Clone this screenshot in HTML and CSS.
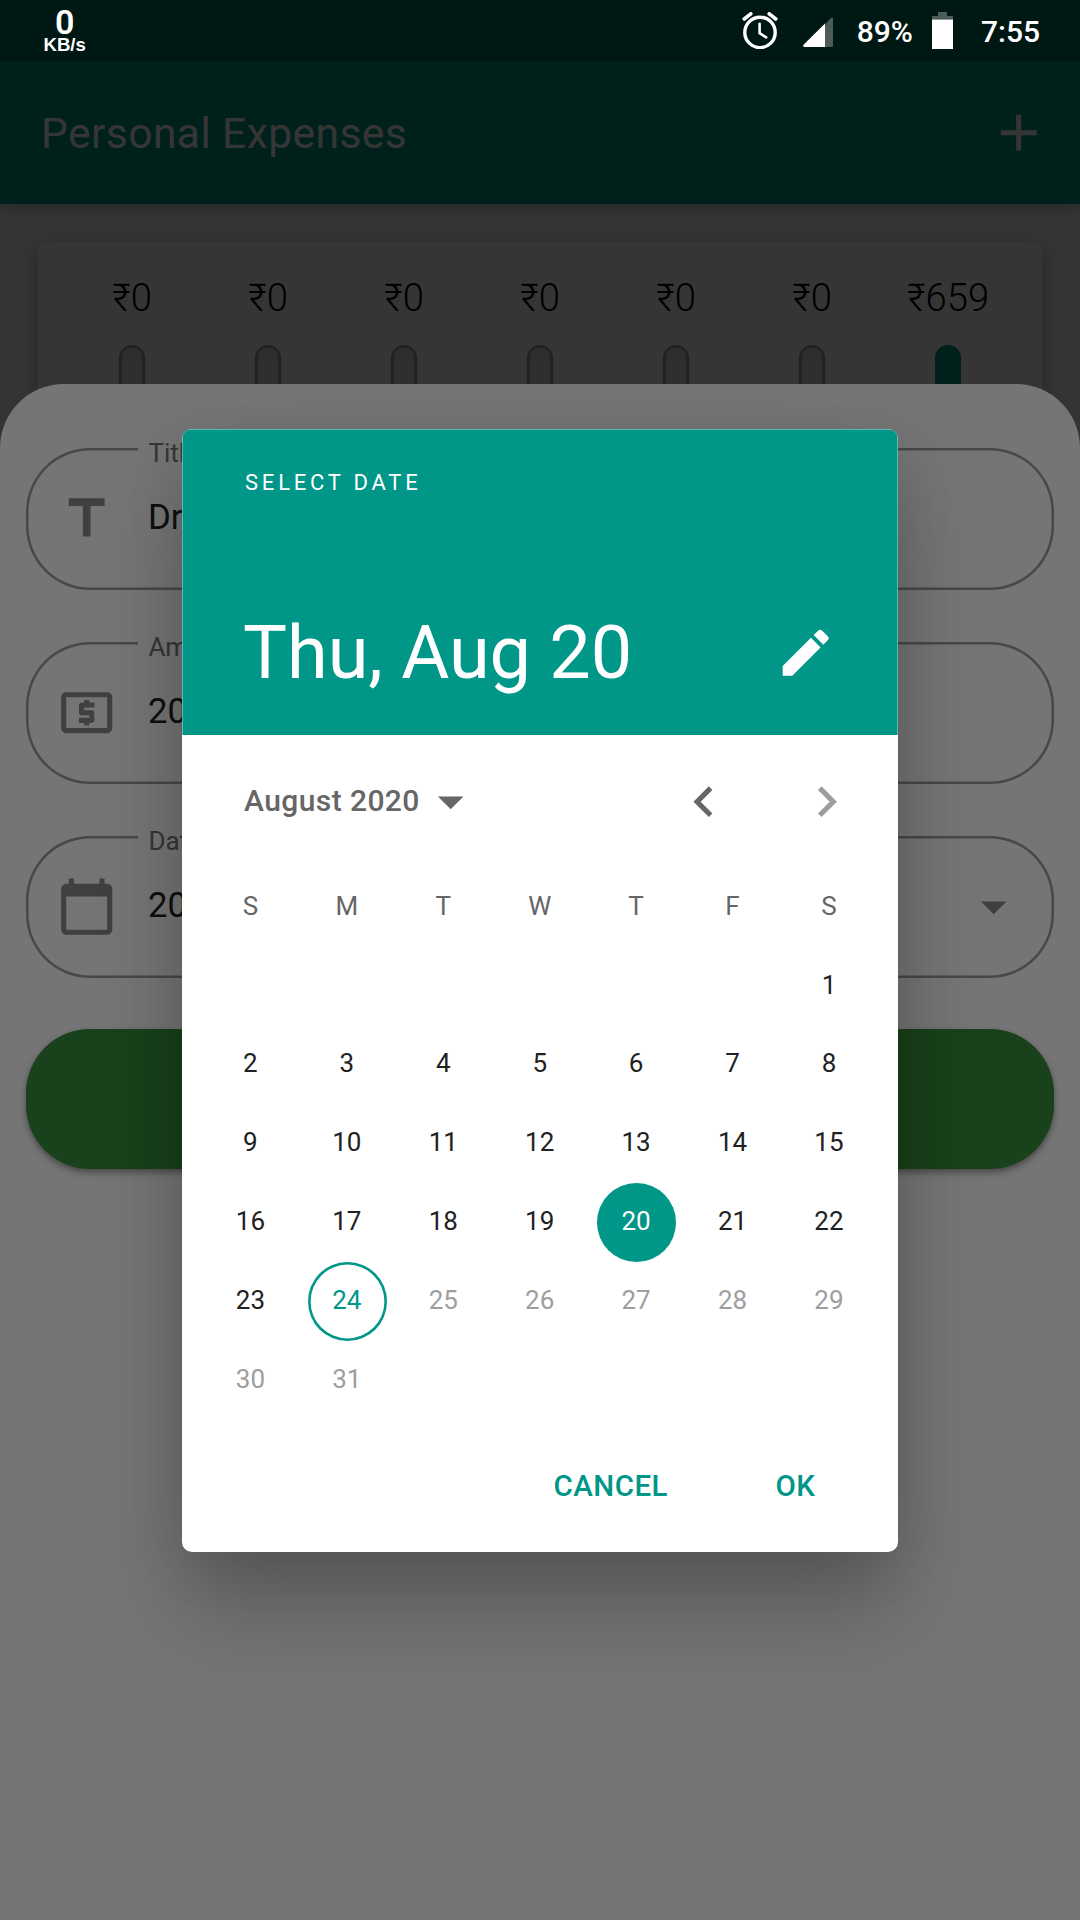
FILE: index.html
```html
<!DOCTYPE html>
<html lang="en">
<head>
<meta charset="utf-8">
<title>Personal Expenses</title>
<link rel="stylesheet" href="styles.css">
</head>
<body>
<div class="screen">
  <div class="home">
    <header class="app-bar">
      <h1 class="app-title">Personal Expenses</h1>
      <svg class="icon" viewBox="0 0 24 24"><path d="M19 13h-6v6h-2v-6H5v-2h6V5h2v6h6v2z"/></svg>
    </header>
    <section class="chart">
      <div class="chart-col"><span class="chart-amount">₹0</span><div class="bar"></div></div>
      <div class="chart-col"><span class="chart-amount">₹0</span><div class="bar"></div></div>
      <div class="chart-col"><span class="chart-amount">₹0</span><div class="bar"></div></div>
      <div class="chart-col"><span class="chart-amount">₹0</span><div class="bar"></div></div>
      <div class="chart-col"><span class="chart-amount">₹0</span><div class="bar"></div></div>
      <div class="chart-col"><span class="chart-amount">₹0</span><div class="bar"></div></div>
      <div class="chart-col"><span class="chart-amount">₹659</span><div class="bar bar-full"></div></div>
    </section>
  </div>
  <div class="barrier"></div>

  <form class="sheet">
    <div class="field">
      <span class="field-label">Title</span>
      <svg class="icon" viewBox="0 0 24 24"><path d="M5 4v3h5.5v12h3V7H19V4z"/></svg>
      <span class="field-value">Dr</span>
    </div>
    <div class="field">
      <span class="field-label">Amount</span>
      <svg class="icon" viewBox="0 0 24 24"><path d="M11 17h2v-1h1c.55 0 1-.45 1-1v-3c0-.55-.45-1-1-1h-3v-1h4V8h-2V7h-2v1h-1c-.55 0-1 .45-1 1v3c0 .55.45 1 1 1h3v1H9v2h2v1zm9-13H4c-1.11 0-1.99.89-1.99 2L2 18c0 1.11.89 2 2 2h16c1.11 0 2-.89 2-2V6c0-1.11-.89-2-2-2zm0 14H4V6h16v12z"/></svg>
      <span class="field-value">20</span>
    </div>
    <div class="field">
      <span class="field-label">Date</span>
      <svg class="icon" viewBox="0 0 24 24"><path d="M20 3h-1V1h-2v2H7V1H5v2H4c-1.1 0-2 .9-2 2v16c0 1.1.9 2 2 2h16c1.1 0 2-.9 2-2V5c0-1.1-.9-2-2-2zm0 18H4V8h16v13z"/></svg>
      <span class="field-value">20</span>
      <svg class="icon" viewBox="0 0 24 24"><path d="M7 10l5 5 5-5z"/></svg>
    </div>
    <div class="submit"></div>
  </form>
  <div class="barrier"></div>

  <div class="dialog">
    <div class="dialog-header">
      <div class="overline">SELECT DATE</div>
      <div class="headline-row">
        <div class="headline">Thu, Aug 20</div>
        <svg class="icon" viewBox="0 0 24 24"><path d="M3 17.25V21h3.75L17.81 9.94l-3.75-3.75L3 17.25zM20.71 7.04c.39-.39.39-1.02 0-1.41l-2.34-2.34c-.39-.39-1.02-.39-1.41 0l-1.83 1.83 3.75 3.75 1.83-1.83z"/></svg>
      </div>
    </div>
    <div class="month-row">
      <span class="month">August 2020</span>
      <svg class="icon" viewBox="0 0 24 24"><path d="M7 10l5 5 5-5z"/></svg>
      <svg class="icon prev" viewBox="0 0 24 24"><path d="M15.41 7.41L14 6l-6 6 6 6 1.41-1.41L10.83 12z"/></svg>
      <svg class="icon next" viewBox="0 0 24 24"><path d="M10 6L8.59 7.41 13.17 12l-4.58 4.59L10 18l6-6z"/></svg>
    </div>
    <div class="days">
      <span class="weekday">S</span><span class="weekday">M</span><span class="weekday">T</span><span class="weekday">W</span><span class="weekday">T</span><span class="weekday">F</span><span class="weekday">S</span>
      <span class="day first">1</span>
      <span class="day">2</span><span class="day">3</span><span class="day">4</span><span class="day">5</span><span class="day">6</span><span class="day">7</span><span class="day">8</span>
      <span class="day">9</span><span class="day">10</span><span class="day">11</span><span class="day">12</span><span class="day">13</span><span class="day">14</span><span class="day">15</span>
      <span class="day">16</span><span class="day">17</span><span class="day">18</span><span class="day">19</span><span class="day selected">20</span><span class="day">21</span><span class="day">22</span>
      <span class="day">23</span><span class="day today">24</span><span class="day off">25</span><span class="day off">26</span><span class="day off">27</span><span class="day off">28</span><span class="day off">29</span>
      <span class="day off">30</span><span class="day off">31</span>
    </div>
    <div class="actions"><span class="action">CANCEL</span><span class="action">OK</span></div>
  </div>

  <div class="status-bar">
    <div class="net"><span class="net-value">0</span><span class="net-unit">KB/s</span></div>
    <svg class="alarm" viewBox="0 0 36 37"><g fill="none" stroke="#fff" stroke-linecap="round"><circle cx="18" cy="20.4" r="15.2" stroke-width="3.4"/><path d="M17.6 11.8v9.4l6.6 4.2" stroke-width="2.6" stroke-linejoin="round"/><path d="M2.2 7L8.8 1.8M33.8 7L27.2 1.8" stroke-width="3.6"/></g></svg>
    <svg class="signal" viewBox="0 0 30 30"><path d="M22 7.5L28 1q2-1.5 2 1V29q0 1-1 1H22z" fill="#4c5b58"/><path d="M22 6.5V30H1.5Q-.8 29.5 .8 27.5z" fill="#fff"/></svg>
    <span class="pct">89%</span>
    <svg class="battery" viewBox="0 0 21 37"><path d="M6 0h9v4h6v3.5H0V4h6z" fill="#4c5b58"/><path d="M0 7.5h21V37H0z" fill="#fff"/></svg>
    <span class="clock">7:55</span>
  </div>
</div>
</body>
</html>
```
FILE: styles.css
```css
* { box-sizing: border-box; }

body {
  margin: 0;
  font-family: Roboto, "Noto Sans", sans-serif;
}

.screen {
  position: relative;
  width: 1080px;
  height: 1920px;
  overflow: hidden;
}

.icon {
  display: block;
  flex: none;
  width: 61.4px;
  height: 61.4px;
  fill: currentColor;
}

.barrier {
  position: absolute;
  inset: 0;
  background: rgba(0, 0, 0, 0.54);
}

/* Home page */
.home {
  height: 100%;
  background: #fafafa;
}

.app-bar {
  display: flex;
  align-items: center;
  justify-content: space-between;
  height: 204px;
  padding: 61px 30.5px 0 41px;
  background: #009a82;
  color: #fff;
  box-shadow: 0 5px 10px rgba(0, 0, 0, 0.12), 0 6px 16px rgba(0, 0, 0, 0.12);
}

.app-title {
  margin: 0;
  font-size: 42.6px;
  font-weight: 400;
  letter-spacing: 0.4px;
}

.chart {
  display: flex;
  height: 380px;
  margin: 38px 38px 0;
  padding: 31px 26px;
  border-radius: 10px;
  background: #fff;
  box-shadow: 0 8px 13px rgba(0, 0, 0, 0.12), 0 6px 30px rgba(0, 0, 0, 0.2);
}

.chart-col {
  flex: 1;
  display: flex;
  flex-direction: column;
  align-items: center;
  gap: 22px;
}

.chart-amount {
  font-size: 38.2px;
  font-weight: 300;
  line-height: 50px;
  color: #000;
}

.bar {
  width: 25.6px;
  height: 154px;
  border-radius: 12.8px;
  background: #dcdcdc;
  box-shadow: inset 0 0 0 2.6px #9e9e9e;
}

.bar-full {
  background: #009a82;
  box-shadow: none;
}

/* Entry form sheet */
.sheet {
  position: absolute;
  inset: 384px 0 0;
  display: flex;
  flex-direction: column;
  gap: 52px;
  padding: 64px 25.6px 0;
  border-radius: 64px 64px 0 0;
  background: #fff;
}

.field {
  position: relative;
  display: flex;
  align-items: center;
  height: 142px;
  padding: 0 30.5px;
  border-radius: 64px;
  box-shadow: inset 0 0 0 2.5px #9e9e9e;
  color: #8c8c8c;
}

.field-label {
  position: absolute;
  left: 112.8px;
  top: -11px;
  padding: 0 10px;
  background: #fff;
  font-size: 26px;
  line-height: 32px;
  color: #757575;
}

.field-value {
  flex: 1;
  padding: 0 0 4px 30.5px;
  font-size: 34.8px;
  color: #212121;
}

.submit {
  height: 140px;
  margin-top: -1px;
  border-radius: 64px;
  background: #388e3c;
  box-shadow: 0 3px 5px rgba(0, 0, 0, 0.22), 0 4px 10px rgba(0, 0, 0, 0.2);
}

/* Date picker dialog */
.dialog {
  position: absolute;
  left: 182px;
  top: 429px;
  width: 716px;
  height: 1123px;
  border-radius: 10px;
  overflow: hidden;
  background: #fff;
  box-shadow: 0 60px 90px -4px rgba(0, 0, 0, 0.23), 0 10px 60px rgba(0, 0, 0, 0.09);
}

.dialog-header {
  height: 306px;
  padding: 41px 62px 0 61px;
  background: #009688;
  color: #fff;
  box-shadow: inset 0 1px rgba(255, 255, 255, 0.35), inset 1px 0 rgba(255, 255, 255, 0.35), inset -1px 0 rgba(255, 255, 255, 0.35);
}

.overline {
  padding-left: 2px;
  font-size: 22px;
  line-height: 26px;
  letter-spacing: 3.78px;
}

.headline-row {
  display: flex;
  align-items: center;
  justify-content: space-between;
  margin-top: 112px;
}

.headline {
  padding-top: 1px;
  font-size: 73.8px;
  line-height: 89px;
}

.month-row {
  display: flex;
  align-items: center;
  height: 132.8px;
  padding: 0 41px 0 62px;
  color: #666;
}

.month {
  font-size: 30px;
  font-weight: 500;
  line-height: 34px;
  letter-spacing: 0.42px;
}

.prev {
  margin-left: auto;
}

.next {
  margin-left: 61px;
  color: #9e9e9e;
}

.days {
  display: grid;
  grid-template-columns: repeat(7, 1fr);
  grid-auto-rows: 78.8px;
  padding: 0 20.5px;
  font-size: 26px;
}

.weekday,
.day {
  display: flex;
  align-items: center;
  justify-content: center;
  padding: 0 0.6px 2.6px 0;
  color: #212121;
}

.weekday { color: #666; }

.first { grid-column: 7; }

.day.off { color: #9e9e9e; }

.selected,
.today {
  justify-self: center;
  width: 78.8px;
  border-radius: 50%;
}

.day.selected {
  background: #009688;
  color: #fff;
}

.day.today {
  box-shadow: inset 0 0 0 2.6px #009688;
  color: #009688;
}

.actions {
  display: flex;
  justify-content: flex-end;
  gap: 107.5px;
  padding: 48.6px 82.5px 0;
  font-size: 29.5px;
  font-weight: 500;
  line-height: 36px;
  letter-spacing: 0.5px;
  color: #009688;
}

/* System status bar */
.status-bar {
  position: absolute;
  inset: 0 0 auto;
  display: flex;
  align-items: center;
  height: 61px;
  padding: 0 40px 0 43.5px;
  background: rgba(0, 0, 0, 0.25);
  color: #fff;
  font-size: 30px;
  font-weight: 500;
}

.net {
  display: flex;
  flex-direction: column;
  align-items: center;
  margin-right: auto;
}

.net-value {
  font-size: 34px;
  font-weight: 600;
  line-height: 28px;
}

.net-unit {
  font: 700 18.6px/18px "Liberation Sans", sans-serif;
}

.alarm {
  width: 36px;
  height: 37px;
}

.signal {
  width: 30px;
  height: 30px;
  margin: 2px 24px 0 25px;
}

.pct,
.clock {
  padding-top: 1px;
}

.battery {
  width: 21px;
  height: 37px;
  margin: 0 28px 0 19px;
}
```
